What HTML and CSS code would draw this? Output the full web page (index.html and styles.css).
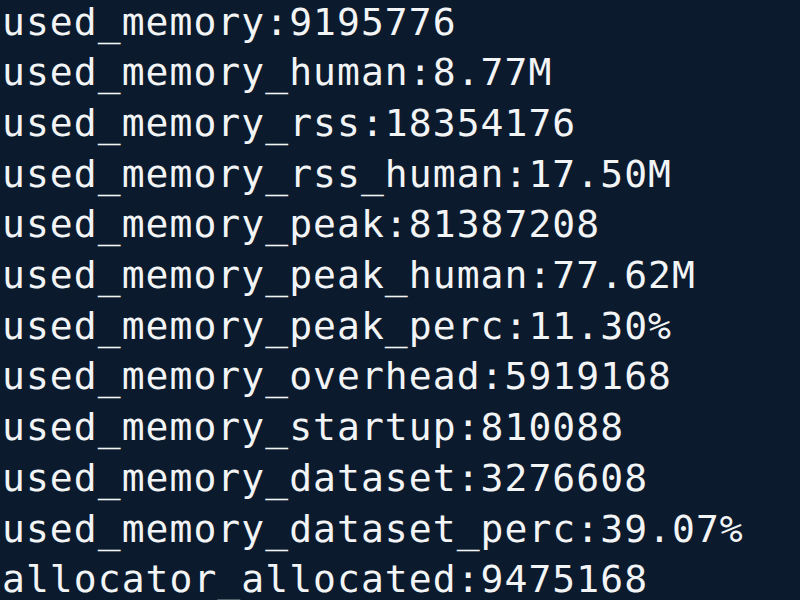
FILE: index.html
```html
<!DOCTYPE html>
<html>
<head>
<meta charset="utf-8">
<link rel="stylesheet" href="styles.css">
</head>
<body>
<pre class="term">used_memory:9195776
used_memory_human:8.77M
used_memory_rss:18354176
used_memory_rss_human:17.50M
used_memory_peak:81387208
used_memory_peak_human:77.62M
used_memory_peak_perc:11.30%
used_memory_overhead:5919168
used_memory_startup:810088
used_memory_dataset:3276608
used_memory_dataset_perc:39.07%
allocator_allocated:9475168</pre>
</body>
</html>
```
FILE: styles.css
```css
html, body {
  margin: 0;
  padding: 0;
  background: #0b1a2d;
  width: 800px;
  height: 600px;
  overflow: hidden;
}
.term {
  margin: -3.5px 0 0 0;
  padding: 0 0 0 2px;
  font-family: "DejaVu Sans Mono", monospace;
  font-size: 38px;
  letter-spacing: 1.05px;
  line-height: 50.7px;
  color: #f2f4f5;
  white-space: pre;
}
```
